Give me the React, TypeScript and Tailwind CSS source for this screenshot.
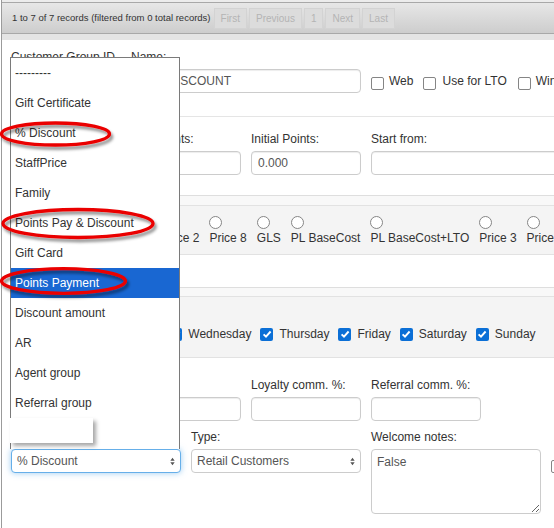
import React from 'react';

const Check = ({ checked, className = '' }: { checked?: boolean; className?: string }) =>
  checked ? (
    <span className={`inline-flex h-[13px] w-[13px] shrink-0 items-center justify-center rounded-[2px] bg-[#0b6fd6] ${className}`}>
      <svg viewBox="0 0 10 10" className="h-[10px] w-[10px]">
        <path d="M1.6 5.3 4 7.7 8.6 2.5" fill="none" stroke="#fff" strokeWidth="1.9" />
      </svg>
    </span>
  ) : (
    <span className={`inline-block h-[13px] w-[13px] shrink-0 rounded-[2px] border border-[#858585] bg-white ${className}`} />
  );

const Label = ({ children }: { children: React.ReactNode }) => (
  <div className="mb-[4px] whitespace-nowrap text-[12px] leading-[15px] text-[#333]">{children}</div>
);

const Input = ({ value = '', className = '' }: { value?: string; className?: string }) => (
  <div
    className={`flex h-[24px] items-center whitespace-nowrap rounded-[4px] border border-[#ccc] bg-white px-[6px] text-[12px] text-[#555] shadow-[inset_0_1px_1px_rgba(0,0,0,0.075)] ${className}`}
  >
    {value}
  </div>
);

const Arrows = () => (
  <svg viewBox="0 0 6 10" className="h-[9px] w-[5px]">
    <path d="M3 0.5 5.6 4 0.4 4Z M3 9.5 5.6 6 0.4 6Z" fill="#555" />
  </svg>
);

const radios = ['Cost', 'Wholesale', 'Price 1', 'Price 2', 'Price 8', 'GLS', 'PL BaseCost', 'PL BaseCost+LTO', 'Price 3', 'Price 4', 'Price 5'];
const days = ['Monday', 'Tuesday', 'Wednesday', 'Thursday', 'Friday', 'Saturday', 'Sunday'];
const groups = [
  '---------',
  'Gift Certificate',
  '% Discount',
  'StaffPrice',
  'Family',
  'Points Pay & Discount',
  'Gift Card',
  'Points Payment',
  'Discount amount',
  'AR',
  'Agent group',
  'Referral group',
];

const App: React.FC = () => {
  return (
    <div className="h-[528px] w-[554px] overflow-hidden bg-white pl-px font-['Liberation_Sans',Arial,sans-serif]">
      <div className="relative h-full border-l border-[#9b9b9b]">
        {/* pager bar */}
        <div className="h-[2px] bg-[#ececec]" />
        <div className="flex h-[32px] items-center border-y border-[#a8a8a8] bg-gradient-to-b from-[#e7e7e7] to-[#cdcdcd] pl-[10px]">
          <span className="whitespace-nowrap text-[9.5px] text-[#333]">1 to 7 of 7 records (filtered from 0 total records)</span>
          <div className="ml-[3px] flex h-[21px] gap-[2px] text-[10px] text-[#b4b4b4]">
            {['First', 'Previous', '1', 'Next', 'Last'].map((b) => (
              <span key={b} className="flex items-center border border-[#d3d3d3] bg-[#dcdcdc] px-[6px]">
                {b}
              </span>
            ))}
          </div>
        </div>
        <div className="h-[6px] bg-[#e4e4e4]" />

        {/* form */}
        <div className="w-[760px] pl-[9px] pt-[10px]">
          <div className="grid grid-cols-[110px_230px_auto] gap-x-[10px]">
            <div>
              <Label>Customer Group ID</Label>
              <Input />
            </div>
            <div>
              <Label>Name:</Label>
              <Input value="10% DISCOUNT" className="pl-[9px]" />
            </div>
            <div className="flex items-center pt-[19px] text-[12px] leading-[14px] text-[#333]">
              <span className="flex h-[24px] items-center gap-[5px]"><Check className="mt-[4px]" /><span>Web</span></span>
              <span className="ml-[10px] flex h-[24px] items-center gap-[6px]"><Check className="mt-[4px]" /><span>Use for LTO</span></span>
              <span className="ml-[11px] flex h-[24px] items-center gap-[5px]"><Check className="mt-[4px]" /><span>Wintel</span></span>
            </div>
          </div>

          <div className="mt-[23px] border-t border-[#e5e5e5]" />

          <div className="mt-[15px] grid grid-cols-[110px_110px_110px_230px] gap-x-[10px]">
            <div>
              <Label>Discount %:</Label>
              <Input />
            </div>
            <div>
              <Label>Max Points:</Label>
              <Input />
            </div>
            <div>
              <Label>Initial Points:</Label>
              <Input value="0.000" />
            </div>
            <div>
              <Label>Start from:</Label>
              <Input />
            </div>
          </div>

          {/* price level panel */}
          <div className="mt-[20px] border-t border-[#dedede]">
            <div className="h-[10px] border-b border-[#e2e2e2] bg-[#f8f8f8]" />
            <div className="flex gap-[10px] border-b border-[#e2e2e2] bg-[#f4f4f4] pb-[9px] pl-[3px] pt-[10px] text-[12px] text-[#333]">
              {radios.map((r) => (
                <div key={r} className="flex flex-col items-start">
                  <span className="block h-[13px] w-[13px] rounded-full border border-[#858585] bg-white" />
                  <span className="mt-[2px] whitespace-nowrap leading-[14px]">{r}</span>
                </div>
              ))}
            </div>
          </div>

          {/* days panel */}
          <div className="mt-[32px] border-t border-[#dedede]">
            <div className="h-[9px] border-b border-[#e2e2e2] bg-[#f8f8f8]" />
            <div className="flex h-[61px] items-start gap-[9px] border-b border-[#e2e2e2] bg-[#f4f4f4] pl-[14px] pt-[30px] text-[12px] text-[#333]">
              {days.map((d) => (
                <span key={d} className="flex items-center gap-[6px] leading-[14px]">
                  <Check checked />
                  <span>{d}</span>
                </span>
              ))}
            </div>
          </div>

          <div className="mt-[20px] grid grid-cols-[110px_110px_110px_110px] gap-x-[10px]">
            <div>
              <Label>Agent %:</Label>
              <Input />
            </div>
            <div>
              <Label>Max %:</Label>
              <Input />
            </div>
            <div>
              <Label>Loyalty comm. %:</Label>
              <Input />
            </div>
            <div>
              <Label>Referral comm. %:</Label>
              <Input />
            </div>
          </div>

          <div className="mt-[9px] grid grid-cols-[170px_170px_170px_40px] gap-x-[10px]">
            <div>
              <Label>Group type:</Label>
              <div className="flex h-[24px] items-center justify-between rounded-[4px] border border-[#66afe9] bg-white pl-[5px] pr-[5px] text-[12px] text-[#555] shadow-[0_0_6px_rgba(102,175,233,0.65)]">
                <span>% Discount</span>
                <Arrows />
              </div>
            </div>
            <div>
              <Label>Type:</Label>
              <div className="flex h-[24px] items-center justify-between rounded-[4px] border border-[#ccc] bg-white pl-[5px] pr-[5px] text-[12px] text-[#555]">
                <span>Retail Customers</span>
                <Arrows />
              </div>
            </div>
            <div>
              <Label>Welcome notes:</Label>
              <textarea
                readOnly
                defaultValue="False"
                className="block h-[65px] w-[170px] resize rounded-[4px] border border-[#ccc] bg-white px-[5px] py-[3px] text-[12px] text-[#555] outline-none"
              />
            </div>
            <div className="pt-[26px]">
              <Check />
            </div>
          </div>
        </div>

        {/* open dropdown list */}
        <div className="absolute left-[8px] top-[57px] w-[170px] border-x border-t border-[#7a7a7a] bg-white text-[12px] text-[#333]">
          {groups.map((g) => (
            <div
              key={g}
              className={`h-[30px] whitespace-nowrap pl-[4px] leading-[30px] ${g === 'Points Payment' ? 'bg-[#1967d2] text-white' : ''}`}
            >
              {g}
            </div>
          ))}
          <div className="relative h-[31px]">
            <div className="absolute left-[-1px] top-0 h-[25px] w-[83px] bg-white shadow-[3px_3px_4px_rgba(0,0,0,0.35)]" />
          </div>
        </div>

        {/* red annotation rings */}
        <svg className="pointer-events-none absolute left-[-2px] top-0" width="554" height="528" viewBox="0 0 554 528">
          <defs>
            <filter id="ringShadow" x="-10%" y="-30%" width="120%" height="180%">
              <feDropShadow dx="2" dy="3" stdDeviation="1.6" floodColor="#000" floodOpacity="0.45" />
            </filter>
          </defs>
          <g fill="none" stroke="#ea0000" strokeWidth="3.3" filter="url(#ringShadow)">
            <ellipse cx="55.5" cy="134" rx="54" ry="11" />
            <ellipse cx="78" cy="223.5" rx="75" ry="14" />
            <ellipse cx="63.5" cy="281" rx="62" ry="12.3" />
          </g>
        </svg>
      </div>
    </div>
  );
};

export default App;
